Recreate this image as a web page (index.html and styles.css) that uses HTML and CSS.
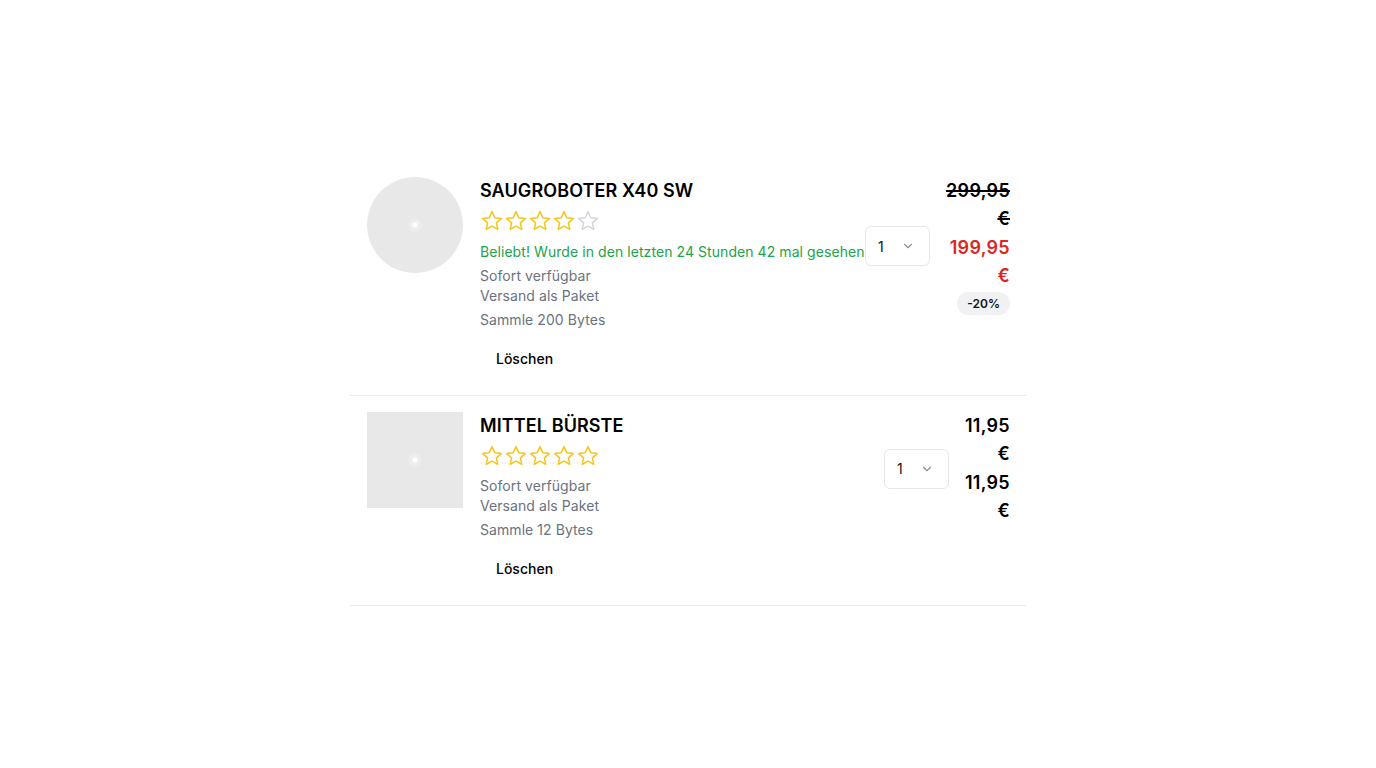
FILE: index.html
```html
<!DOCTYPE html>
<html lang="de">
<head>
<meta charset="utf-8">
<title>Warenkorb</title>
<link rel="stylesheet" href="styles.css">
</head>
<body>
<main class="cart">
  <article class="item">
    <div class="thumb thumb-round"><span class="ph"></span></div>
    <div class="info">
      <h2 class="title">SAUGROBOTER X40 SW</h2>
      <div class="stars">
        <svg viewBox="0 0 24 24" class="star on"><path d="M12 2.6l2.75 6.1 6.65.7-5 4.5 1.4 6.55L12 17.1l-5.8 3.35 1.4-6.55-5-4.5 6.65-.7z"/></svg>
        <svg viewBox="0 0 24 24" class="star on"><path d="M12 2.6l2.75 6.1 6.65.7-5 4.5 1.4 6.55L12 17.1l-5.8 3.35 1.4-6.55-5-4.5 6.65-.7z"/></svg>
        <svg viewBox="0 0 24 24" class="star on"><path d="M12 2.6l2.75 6.1 6.65.7-5 4.5 1.4 6.55L12 17.1l-5.8 3.35 1.4-6.55-5-4.5 6.65-.7z"/></svg>
        <svg viewBox="0 0 24 24" class="star on"><path d="M12 2.6l2.75 6.1 6.65.7-5 4.5 1.4 6.55L12 17.1l-5.8 3.35 1.4-6.55-5-4.5 6.65-.7z"/></svg>
        <svg viewBox="0 0 24 24" class="star off"><path d="M12 2.6l2.75 6.1 6.65.7-5 4.5 1.4 6.55L12 17.1l-5.8 3.35 1.4-6.55-5-4.5 6.65-.7z"/></svg>
      </div>
      <p class="popular">Beliebt! Wurde in den letzten 24 Stunden 42 mal gesehen</p>
      <p class="meta">Sofort verfügbar</p>
      <p class="meta">Versand als Paket</p>
      <p class="meta bytes">Sammle 200 Bytes</p>
      <button class="delete" type="button">Löschen</button>
    </div>
    <div class="side">
      <div class="qty">
        <span class="qty-val">1</span>
        <svg viewBox="0 0 16 16" class="chev"><path d="M4 6l4 4 4-4"/></svg>
      </div>
      <div class="price">
        <div class="old">299,95 €</div>
        <div class="now sale">199,95 €</div>
        <span class="badge">-20%</span>
      </div>
    </div>
  </article>

  <article class="item">
    <div class="thumb"><span class="ph"></span></div>
    <div class="info">
      <h2 class="title">MITTEL BÜRSTE</h2>
      <div class="stars">
        <svg viewBox="0 0 24 24" class="star on"><path d="M12 2.6l2.75 6.1 6.65.7-5 4.5 1.4 6.55L12 17.1l-5.8 3.35 1.4-6.55-5-4.5 6.65-.7z"/></svg>
        <svg viewBox="0 0 24 24" class="star on"><path d="M12 2.6l2.75 6.1 6.65.7-5 4.5 1.4 6.55L12 17.1l-5.8 3.35 1.4-6.55-5-4.5 6.65-.7z"/></svg>
        <svg viewBox="0 0 24 24" class="star on"><path d="M12 2.6l2.75 6.1 6.65.7-5 4.5 1.4 6.55L12 17.1l-5.8 3.35 1.4-6.55-5-4.5 6.65-.7z"/></svg>
        <svg viewBox="0 0 24 24" class="star on"><path d="M12 2.6l2.75 6.1 6.65.7-5 4.5 1.4 6.55L12 17.1l-5.8 3.35 1.4-6.55-5-4.5 6.65-.7z"/></svg>
        <svg viewBox="0 0 24 24" class="star on"><path d="M12 2.6l2.75 6.1 6.65.7-5 4.5 1.4 6.55L12 17.1l-5.8 3.35 1.4-6.55-5-4.5 6.65-.7z"/></svg>
      </div>
      <p class="meta">Sofort verfügbar</p>
      <p class="meta">Versand als Paket</p>
      <p class="meta bytes">Sammle 12 Bytes</p>
      <button class="delete" type="button">Löschen</button>
    </div>
    <div class="side">
      <div class="qty">
        <span class="qty-val">1</span>
        <svg viewBox="0 0 16 16" class="chev"><path d="M4 6l4 4 4-4"/></svg>
      </div>
      <div class="price">
        <div class="now">11,95 €</div>
        <div class="now">11,95 €</div>
      </div>
    </div>
  </article>
</main>
</body>
</html>
```
FILE: styles.css
```css
* { box-sizing: border-box; }
html, body { margin: 0; padding: 0; background: #fff; }
body {
  font-family: Inter, "Liberation Sans", sans-serif;
  color: #111;
}
.cart {
  width: 676px;
  margin: 161px auto 0;
}
.item {
  display: flex;
  align-items: flex-start;
  padding: 16px 16px 17px 17px;
  border-bottom: 1px solid #ebebeb;
}
.thumb {
  flex: 0 0 96px;
  width: 96px;
  height: 96px;
  background: #e8e8e8;
  margin-right: 17px;
  display: flex;
  align-items: center;
  justify-content: center;
}
.thumb-round { border-radius: 50%; }
.ph {
  width: 14px;
  height: 14px;
  border-radius: 50%;
  background: radial-gradient(circle, #ffffff 0 2px, #efefef 3px, #eaeaea 7px);
}
.info {
  flex: 1 1 auto;
  min-width: 0;
  display: flex;
  flex-direction: column;
  align-items: flex-start;
}
.title {
  margin: 0;
  font-size: 18px;
  line-height: 28px;
  font-weight: 600;
  color: #000;
  letter-spacing: 0.1px;
}
.stars {
  display: flex;
  height: 28px;
  margin-top: 4px;
}
.star {
  width: 24px;
  height: 24px;
  fill: none;
  stroke-width: 1.5;
  stroke-linejoin: round;
}
.star.on { stroke: #f5c518; }
.star.off { stroke: #d4d6db; }
.popular {
  margin: 5px 0 0;
  font-size: 14px;
  line-height: 20px;
  color: #22a34a;
  white-space: nowrap;
  letter-spacing: 0.07px;
}
.meta {
  margin: 0;
  font-size: 14px;
  line-height: 20px;
  color: #6b7280;
  letter-spacing: 0.07px;
}
.stars + .meta { margin-top: 4px; }
.popular + .meta { margin-top: 4px; }
.bytes { margin-top: 4px; }
.delete {
  margin-top: 8px;
  height: 40px;
  padding: 0 16px;
  border: 0;
  background: transparent;
  font-family: inherit;
  font-size: 14px;
  font-weight: 500;
  color: #000;
  cursor: pointer;
}
.side {
  display: flex;
  align-items: center;
  gap: 16px;
  flex: 0 0 auto;
}
.qty {
  width: 65px;
  height: 40px;
  border: 1px solid #e5e7eb;
  border-radius: 6px;
  display: flex;
  align-items: center;
  justify-content: space-between;
  padding: 0 14px 0 12px;
  background: #fff;
}
.qty-val {
  font-size: 14px;
  color: #111;
}
.chev {
  width: 14px;
  height: 14px;
  fill: none;
  stroke: #8a8f98;
  stroke-width: 1.3;
  stroke-linecap: round;
  stroke-linejoin: round;
}
.price {
  width: min-content;
  display: flex;
  flex-direction: column;
  align-items: flex-end;
  text-align: right;
}
.old, .now {
  font-size: 18px;
  line-height: 28.3px;
  font-weight: 600;
  color: #000;
  letter-spacing: 0.3px;
}
.old { text-decoration: line-through; text-decoration-thickness: 2px; }
.now.sale { color: #dc2626; }
.badge {
  margin-top: 2px;
  display: inline-block;
  padding: 0 10px;
  height: 23px;
  line-height: 23px;
  border-radius: 12px;
  background: #f1f1f3;
  font-size: 12px;
  font-weight: 600;
  color: #111;
  white-space: nowrap;
}
```
